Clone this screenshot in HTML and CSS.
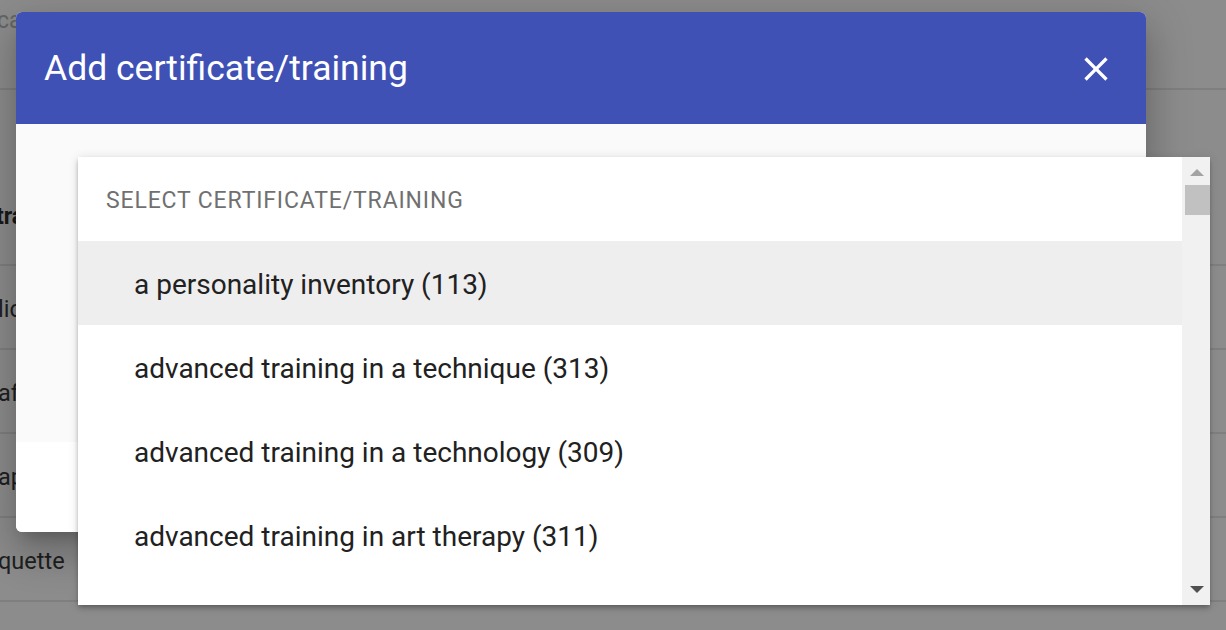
FILE: index.html
```html
<!DOCTYPE html>
<html lang="en">
<head>
<meta charset="utf-8">
<title>Add certificate/training</title>
<link rel="stylesheet" href="styles.css">
</head>
<body>
<main class="page">
  <div class="search-row"><span class="placeholder">ca</span></div>
  <div class="table-head"><span class="head-cell">tra</span></div>
  <div class="row"><span class="cell">lic</span></div>
  <div class="row"><span class="cell">afe</span></div>
  <div class="row"><span class="cell">ap</span></div>
  <div class="row"><span class="cell">quette</span></div>
</main>

<div class="overlay"></div>

<section class="dialog" role="dialog" aria-label="Add certificate/training">
  <header class="dialog-header">
    <h1 class="dialog-title">Add certificate/training</h1>
    <button class="close-btn" aria-label="Close">
      <svg viewBox="0 0 24 24" width="40" height="40"><path d="M19 6.41 17.59 5 12 10.59 6.41 5 5 6.41 10.59 12 5 17.59 6.41 19 12 13.41 17.59 19 19 17.59 13.41 12z" fill="#fff"/></svg>
    </button>
  </header>
  <div class="dialog-body"></div>
  <div class="dialog-footer"></div>
</section>

<div class="menu" role="listbox">
  <div class="menu-list">
    <div class="menu-header">SELECT CERTIFICATE/TRAINING</div>
    <div class="menu-item active">a personality inventory (113)</div>
    <div class="menu-item">advanced training in a technique (313)</div>
    <div class="menu-item">advanced training in a technology (309)</div>
    <div class="menu-item">advanced training in art therapy (311)</div>
    <div class="menu-item">advanced training in bioethics (310)</div>
  </div>
  <div class="scrollbar">
    <span class="arrow-up"></span>
    <span class="thumb"></span>
    <span class="spacer"></span>
    <span class="arrow-down"></span>
  </div>
</div>
</body>
</html>
```
FILE: styles.css
```css
* { box-sizing: border-box; }

html, body {
  margin: 0;
  height: 100%;
  overflow: hidden;
}

body {
  font-family: Roboto, "Noto Sans", "Liberation Sans", sans-serif;
  background: #ffffff;
  color: #212121;
}

/* background page */
.page {
  display: flex;
  flex-direction: column;
}

.search-row {
  height: 90px;
  border-bottom: 2px solid #e8e8e8;
  padding-top: 8px;
  font-size: 23px;
  line-height: 26px;
}

.placeholder {
  color: #b8b8b8;
  margin-left: -3px;
}

.table-head {
  height: 176px;
  border-bottom: 2px solid #e8e8e8;
  display: flex;
  align-items: flex-end;
  padding-bottom: 34px;
  font-size: 23px;
}

.head-cell {
  font-weight: 700;
  color: #2e2e2e;
  margin-left: -4px;
}

.row {
  height: 84px;
  border-bottom: 2px solid #e8e8e8;
  display: flex;
  align-items: center;
  padding-top: 4px;
  font-size: 23.5px;
  color: #3a3a3a;
}

.cell { margin-left: -2px; }

.overlay {
  position: fixed;
  inset: 0;
  background: rgba(0, 0, 0, 0.45);
}

/* dialog */
.dialog {
  position: absolute;
  left: 16px;
  top: 12px;
  width: 1130px;
  height: 520px;
  border-radius: 6px;
  overflow: hidden;
  display: flex;
  flex-direction: column;
  background: #fff;
  box-shadow: 0 11px 15px -7px rgba(0,0,0,.2), 0 24px 38px 3px rgba(0,0,0,.14), 0 9px 46px 8px rgba(0,0,0,.12);
}

.dialog-header {
  height: 112px;
  flex: none;
  background: #3f51b5;
  display: flex;
  align-items: center;
  justify-content: space-between;
  padding: 0 30px 0 28px;
}

.dialog-title {
  margin: 0;
  font-size: 35.5px;
  font-weight: 400;
  color: #fff;
}

.close-btn {
  border: 0;
  background: transparent;
  padding: 0;
  width: 40px;
  height: 40px;
  display: flex;
  cursor: pointer;
  margin-top: 2px;
}

.dialog-body {
  height: 318px;
  flex: none;
  background: #fafafa;
}

.dialog-footer {
  flex: 1;
  background: #fff;
}

/* dropdown menu */
.menu {
  position: absolute;
  left: 78px;
  top: 157px;
  width: 1132px;
  height: 448px;
  display: flex;
  background: #fff;
  box-shadow: 0 2px 4px -1px rgba(0,0,0,.2), 0 4px 5px 0 rgba(0,0,0,.14), 0 1px 10px 0 rgba(0,0,0,.12);
}

.menu-list {
  flex: 1;
  overflow: hidden;
  background: #fff;
}

.menu-header {
  height: 84px;
  display: flex;
  align-items: center;
  padding: 2px 0 0 28px;
  font-size: 23px;
  font-weight: 400;
  letter-spacing: 0.85px;
  color: #707070;
}

.menu-item {
  height: 84px;
  display: flex;
  align-items: center;
  padding: 2px 0 0 56px;
  font-size: 28px;
  color: #212121;
  white-space: nowrap;
}

.menu-item.active { background: #eeeeee; }

.scrollbar {
  width: 28px;
  flex: none;
  background: #f1f1f1;
  display: flex;
  flex-direction: column;
  align-items: center;
  padding: 12px 0 12px 2px;
}

.arrow-up {
  width: 0;
  height: 0;
  border-left: 7px solid transparent;
  border-right: 7px solid transparent;
  border-bottom: 7px solid #a3a3a3;
}

.thumb {
  width: 25px;
  height: 30px;
  background: #c1c1c1;
  margin-top: 9px;
}

.spacer { flex: 1; }

.arrow-down {
  width: 0;
  height: 0;
  border-left: 7px solid transparent;
  border-right: 7px solid transparent;
  border-top: 7px solid #505050;
}
```
